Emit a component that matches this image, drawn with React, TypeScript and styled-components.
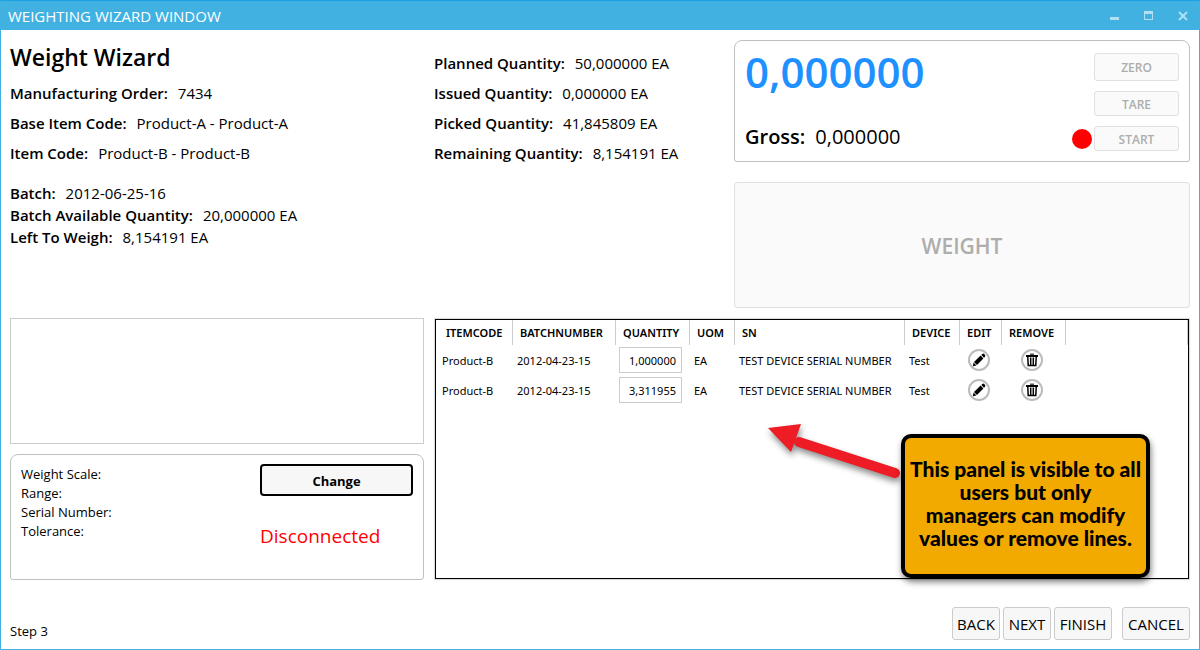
import React from 'react';
import styled, { createGlobalStyle } from 'styled-components';

const GlobalStyle = createGlobalStyle`
  *, *::before, *::after { box-sizing: border-box; }
  body { margin: 0; background: #fff; }
  body, button, input, textarea {
    font-family: 'Open Sans', 'Noto Sans', sans-serif;
    color: #000;
  }
`;

const Window = styled.div`
  display: flex;
  flex-direction: column;
  min-height: 100vh;
  border: 1px solid #41b1e1;
  border-top-color: #1ba1e2;
`;

const TitleBar = styled.header`
  display: flex;
  align-items: center;
  justify-content: space-between;
  height: 29px;
  padding: 0 4px 0 7px;
  background: #41b1e1;
  color: #fff;
`;

const WindowTitle = styled.span`
  font-size: 15px;
  line-height: 20px;
`;

const WindowControls = styled.div`
  display: flex;
`;

const ControlButton = styled.button`
  display: flex;
  align-items: center;
  justify-content: center;
  width: 34px;
  height: 28px;
  padding: 0;
  border: 0;
  background: none;
  color: #b3dff3;
  &:last-child { width: 24px; margin-left: 6px; }
`;

const Content = styled.main`
  flex: 1;
  display: grid;
  grid-template-columns: minmax(0, 414fr) minmax(0, 290fr) minmax(0, 456fr);
  grid-template-rows: 268px 262px;
  gap: 10px;
  padding: 10px 9px 0;
`;

const Column = styled.section`
  display: flex;
  flex-direction: column;
  gap: 10px;
`;

const Heading = styled.h1`
  margin: 0;
  font-size: 23px;
  font-weight: 600;
  line-height: 35px;
`;

const Facts = styled.dl<{ $row: number; $top?: number }>`
  margin: ${(p) => p.$top ?? 0}px 0 0;
  font-size: 15px;
  line-height: ${(p) => p.$row}px;
`;

const Fact = styled.div`
  display: flex;
  gap: 10px;
  white-space: nowrap;
  dt { font-weight: 600; }
  dd { margin: 0; }
`;

const Info = styled.section`
  display: flex;
  flex-direction: column;
`;

const ScaleColumn = styled(Column)`
  gap: 20px;
`;

const Readout = styled.div`
  display: flex;
  justify-content: space-between;
  height: 122px;
  padding: 12px 10px 0;
  border: 1px solid #c0c0c0;
  border-radius: 8px 8px 3px 3px;
`;

const Values = styled.div`
  display: flex;
  flex-direction: column;
  gap: 26px;
`;

const NetValue = styled.output`
  color: #1e90ff;
  font-size: 42px;
  font-weight: 600;
  line-height: 38px;
`;

const Gross = styled.div`
  display: flex;
  gap: 10px;
  font-size: 20px;
  line-height: 40px;
  strong { font-weight: 600; }
`;

const ScaleActions = styled.div`
  display: flex;
  flex-direction: column;
  align-items: flex-end;
  gap: 10px;
`;

const StartRow = styled.div`
  display: flex;
  align-items: center;
  gap: 2px;
`;

const StatusDot = styled.span`
  width: 20px;
  height: 20px;
  border-radius: 50%;
  background: #f00;
`;

const ScaleButton = styled.button<{ $tall?: boolean }>`
  width: 85px;
  height: ${(p) => (p.$tall ? 28 : 25)}px;
  padding: 1px 0 0;
  border: 1px solid #e0e0e0;
  border-radius: 3px;
  background: #fafafa;
  color: #adadad;
  font-size: 12px;
  font-weight: 600;
`;

const WeightButton = styled(ScaleButton)`
  width: 100%;
  height: 126px;
  font-size: 21px;
`;

const Notes = styled.textarea`
  display: block;
  width: 100%;
  height: 126px;
  border: 1px solid #ccc;
  resize: none;
`;

const DevicePanel = styled.div`
  display: flex;
  justify-content: space-between;
  height: 126px;
  padding: 9px 10px;
  border: 1px solid #c0c0c0;
  border-radius: 8px 8px 3px 3px;
`;

const DeviceFacts = styled.div`
  padding-top: 1px;
  font-size: 13px;
  line-height: 19px;
`;

const DeviceState = styled.div`
  display: flex;
  flex-direction: column;
  gap: 26px;
  width: 153px;
`;

const ChangeButton = styled.button`
  height: 32px;
  padding: 1px 0 0;
  border: 2px solid #000;
  border-radius: 4px;
  background: #f7f7f7;
  font-size: 13px;
  font-weight: 700;
`;

const Disconnected = styled.span`
  color: #f00;
  font-size: 19px;
  line-height: 28px;
`;

const LinesPanel = styled.section`
  position: relative;
  grid-column: 2 / 4;
  margin: 1px;
  padding-left: 2px;
  border: 1px solid #000;
  box-shadow: 0 0 1px 1px #ddd;
`;

const Lines = styled.table`
  width: 100%;
  border-collapse: separate;
  border-spacing: 0;
  table-layout: fixed;
  font-family: 'Noto Sans', 'Open Sans', sans-serif;
  font-size: 11px;
  white-space: nowrap;
`;

const HeadCell = styled.th<{ $width?: number }>`
  width: ${(p) => (p.$width ? `${p.$width}px` : 'auto')};
  height: 25px;
  padding: 0 0 0 7px;
  border-right: 1px solid #ccc;
  font-size: 11px;
  font-weight: 600;
  text-align: left;
  &:first-child { padding-left: 8px; }
`;

const Cell = styled.td<{ $center?: boolean }>`
  height: 30px;
  padding: ${(p) => (p.$center ? '0 4px 0 0' : '0 0 0 4px')};
  text-align: ${(p) => (p.$center ? 'center' : 'left')};
`;

const QuantityCell = styled(Cell)`
  padding-left: 3px;
`;

const QuantityInput = styled.input`
  display: block;
  width: 63px;
  height: 26px;
  padding: 0 5px;
  border: 1px solid #ccc;
  font-size: 11px;
  font-family: inherit;
  text-align: right;
`;

const RoundButton = styled.button`
  display: flex;
  align-items: center;
  justify-content: center;
  width: 22px;
  height: 22px;
  margin: 0 auto;
  padding: 0;
  border: 2px solid #bbb;
  border-radius: 50%;
  background: #fff;
`;

const Callout = styled.div`
  position: absolute;
  right: 38px;
  bottom: 0;
  display: flex;
  flex-direction: column;
  justify-content: center;
  width: 249px;
  height: 144px;
  padding-bottom: 6px;
  border: 4px solid #000;
  border-radius: 10px;
  background: #f2a900;
  box-shadow: 1px 4px 6px rgba(0, 0, 0, 0.5);
  font-family: Lato, 'Open Sans', sans-serif;
  font-size: 21px;
  font-weight: 900;
  line-height: 23px;
  text-align: center;
  white-space: nowrap;
`;

const Arrow = styled.svg`
  position: absolute;
  right: 282px;
  bottom: 92px;
  filter: drop-shadow(1px 4px 3px rgba(0, 0, 0, 0.45));
`;

const Footer = styled.footer`
  display: flex;
  align-items: flex-end;
  justify-content: space-between;
  padding: 0 9px 9px;
`;

const Step = styled.span`
  font-size: 13px;
  line-height: 18px;
`;

const Actions = styled.div`
  display: flex;
  gap: 3px;
`;

const ActionButton = styled.button<{ $width: number; $apart?: boolean }>`
  width: ${(p) => p.$width}px;
  height: 33px;
  margin-left: ${(p) => (p.$apart ? 7 : 0)}px;
  padding: 0;
  border: 1px solid #ccc;
  border-radius: 3px;
  background: #f7f7f7;
  font-size: 15px;
`;

const PencilIcon = () => (
  <svg width="14" height="14" viewBox="0 0 14 14" aria-hidden="true">
    <path d="M.8 13.2 L1.6 9.6 L4.4 12.4 Z M2 8.9 L8.6 2.6 L11.4 5.4 L5 11.9 Z M9.3 1.9 L10.4 .9 Q11.4 .2 12.4 1.2 L12.9 1.7 Q13.8 2.7 13 3.7 L12 4.7 Z" fill="#000" />
  </svg>
);

const TrashIcon = () => (
  <svg width="14" height="14" viewBox="0 0 14 14" aria-hidden="true">
    <path d="M5 2 V.5 H9 V2" fill="#555" />
    <path d="M1 2 H13 V4 H1 Z" fill="#000" />
    <path d="M2.8 4 L3.2 12.4 H10.8 L11.2 4 M5.7 4.5 V12 M8.3 4.5 V12" fill="none" stroke="#000" strokeWidth="1.5" />
  </svg>
);

const columns: { name: string; width?: number }[] = [
  { name: 'ITEMCODE', width: 75 },
  { name: 'BATCHNUMBER', width: 103 },
  { name: 'QUANTITY', width: 74 },
  { name: 'UOM', width: 45 },
  { name: 'SN', width: 170 },
  { name: 'DEVICE', width: 55 },
  { name: 'EDIT', width: 42 },
  { name: 'REMOVE', width: 64 },
  { name: '' },
];

const lines = [
  { id: 1, quantity: '1,000000' },
  { id: 2, quantity: '3,311955' },
];

const FactList = ({ row, top, items }: { row: number; top?: number; items: [string, string][] }) => (
  <Facts $row={row} $top={top}>
    {items.map(([label, value]) => (
      <Fact key={label}>
        <dt>{label}</dt>
        <dd>{value}</dd>
      </Fact>
    ))}
  </Facts>
);

export default function App() {
  return (
    <>
      <GlobalStyle />
      <Window>
        <TitleBar>
          <WindowTitle>WEIGHTING WIZARD WINDOW</WindowTitle>
          <WindowControls>
            <ControlButton aria-label="Minimize">
              <svg width="9" height="10"><path d="M0 6 H9 V9 H0 Z" fill="currentColor" /></svg>
            </ControlButton>
            <ControlButton aria-label="Maximize">
              <svg width="9" height="9"><path d="M0 0 H9 V9 H0 Z M1 3 V8 H8 V3 Z" fill="currentColor" fillRule="evenodd" /></svg>
            </ControlButton>
            <ControlButton aria-label="Close">
              <svg width="10" height="10"><path d="M1 1 L9 9 M9 1 L1 9" stroke="currentColor" strokeWidth="2" /></svg>
            </ControlButton>
          </WindowControls>
        </TitleBar>

        <Content>
          <Info>
            <Heading>Weight Wizard</Heading>
            <FactList
              row={30}
              top={3}
              items={[
                ['Manufacturing Order:', '7434'],
                ['Base Item Code:', 'Product-A - Product-A'],
                ['Item Code:', 'Product-B - Product-B'],
              ]}
            />
            <FactList
              row={22}
              top={14}
              items={[
                ['Batch:', '2012-06-25-16'],
                ['Batch Available Quantity:', '20,000000 EA'],
                ['Left To Weigh:', '8,154191 EA'],
              ]}
            />
          </Info>

          <Info>
            <FactList
              row={30}
              top={8}
              items={[
                ['Planned Quantity:', '50,000000 EA'],
                ['Issued Quantity:', '0,000000 EA'],
                ['Picked Quantity:', '41,845809 EA'],
                ['Remaining Quantity:', '8,154191 EA'],
              ]}
            />
          </Info>

          <ScaleColumn>
            <Readout>
              <Values>
                <NetValue>0,000000</NetValue>
                <Gross><strong>Gross:</strong><span>0,000000</span></Gross>
              </Values>
              <ScaleActions>
                <ScaleButton $tall disabled>ZERO</ScaleButton>
                <ScaleButton disabled>TARE</ScaleButton>
                <StartRow>
                  <StatusDot />
                  <ScaleButton disabled>START</ScaleButton>
                </StartRow>
              </ScaleActions>
            </Readout>
            <WeightButton disabled>WEIGHT</WeightButton>
          </ScaleColumn>

          <Column>
            <Notes aria-label="Notes" />
            <DevicePanel>
              <DeviceFacts>
                <div>Weight Scale:</div>
                <div>Range:</div>
                <div>Serial Number:</div>
                <div>Tolerance:</div>
              </DeviceFacts>
              <DeviceState>
                <ChangeButton>Change</ChangeButton>
                <Disconnected>Disconnected</Disconnected>
              </DeviceState>
            </DevicePanel>
          </Column>

          <LinesPanel>
            <Lines>
              <thead>
                <tr>
                  {columns.map((c) => (
                    <HeadCell key={c.name} $width={c.width}>{c.name}</HeadCell>
                  ))}
                </tr>
              </thead>
              <tbody>
                {lines.map((line) => (
                  <tr key={line.id}>
                    <Cell>Product-B</Cell>
                    <Cell>2012-04-23-15</Cell>
                    <QuantityCell><QuantityInput aria-label="Quantity" defaultValue={line.quantity} /></QuantityCell>
                    <Cell>EA</Cell>
                    <Cell>TEST DEVICE SERIAL NUMBER</Cell>
                    <Cell>Test</Cell>
                    <Cell $center><RoundButton aria-label="Edit"><PencilIcon /></RoundButton></Cell>
                    <Cell $center><RoundButton aria-label="Remove"><TrashIcon /></RoundButton></Cell>
                    <Cell />
                  </tr>
                ))}
              </tbody>
            </Lines>
            <Arrow width="140" height="64" viewBox="0 0 140 64" aria-hidden="true">
              <path d="M33 20 L129 51" stroke="#ee1c24" strokeWidth="10" strokeLinecap="round" />
              <path d="M2 6 L35 2 L25 30 Z" fill="#ee1c24" />
            </Arrow>
            <Callout>
              <span>This panel is visible to all</span>
              <span>users but only</span>
              <span>managers can modify</span>
              <span>values or remove lines.</span>
            </Callout>
          </LinesPanel>
        </Content>

        <Footer>
          <Step>Step 3</Step>
          <Actions>
            <ActionButton $width={48}>BACK</ActionButton>
            <ActionButton $width={48}>NEXT</ActionButton>
            <ActionButton $width={58}>FINISH</ActionButton>
            <ActionButton $width={68} $apart>CANCEL</ActionButton>
          </Actions>
        </Footer>
      </Window>
    </>
  );
}
